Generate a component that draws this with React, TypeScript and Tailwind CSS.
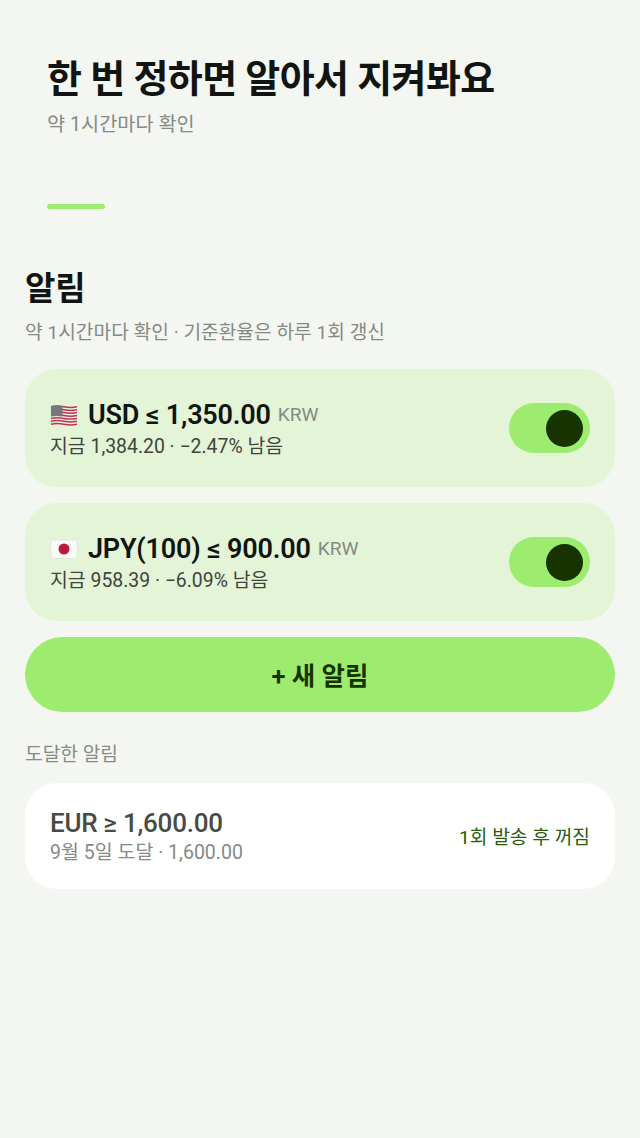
import React from 'react';

const font = { fontFamily: 'Roboto, "Noto Sans CJK KR", sans-serif' };

const stripes = [3.8, 6.7, 9.6, 12.5, 15.4, 18.3, 21.2];

const UsFlag = () => (
  <svg width="28" height="24" viewBox="0 0 28 24" className="shrink-0">
    <path d="M1 3.5 Q7 2 14 3.5 T27 3.5 V21.5 Q21 20 14 21.5 T1 21.5 Z" fill="#ececec" />
    {stripes.map(y => (
      <path key={y} d={`M1 ${y} Q7 ${y - 1.4} 14 ${y} T27 ${y}`} fill="none" stroke="#b8384e" strokeWidth="1.5" />
    ))}
    <path d="M1 3.2 Q6 2 12.5 3 V13.4 Q6 12.4 1 13.6 Z" fill="#77787c" />
  </svg>
);

const JpFlag = () => (
  <svg width="28" height="24" viewBox="0 0 28 24" className="shrink-0">
    <rect x="1" y="3" width="26" height="18" rx="1.5" fill="#fafafa" stroke="#dddddd" strokeWidth="0.5" />
    <circle cx="14" cy="12" r="5.5" fill="#bc1c3c" />
  </svg>
);

type AlertProps = {
  flag: React.ReactNode;
  title: string;
  detail: string;
};

const Toggle = () => (
  <div className="flex h-[50px] w-[81px] shrink-0 items-center justify-end rounded-full bg-[#9deb6f] pr-[7px]">
    <div className="size-[37px] rounded-full bg-[#173300]" />
  </div>
);

const AlertCard = ({ flag, title, detail }: AlertProps) => (
  <div className="flex h-[118px] items-center justify-between rounded-[32px] bg-[#e3f5d6] px-[25px]">
    <div>
      <div className="flex items-center">
        {flag}
        <span className="ml-[10px] text-[27px] leading-[36px] font-semibold tracking-[-0.2px] text-[#111411]">{title}</span>
        <span className="ml-[7px] pt-[1px] text-[19.2px] text-[#858a84]">KRW</span>
      </div>
      <p className="mt-[1px] text-[19.4px] leading-[26px] text-[#3f433e]">{detail}</p>
    </div>
    <Toggle />
  </div>
);

export default function App() {
  return (
    <div className="min-h-[1138px] bg-[#f4f6f1]" style={font}>
      <div className="px-[47px] pt-[52px]">
        <h1 className="text-[38px] leading-[54px] font-semibold tracking-[-0.6px] text-[#111411]">한 번 정하면 알아서 지켜봐요</h1>
        <p className="mt-[4px] text-[19.7px] leading-[30px] text-[#858a84]">약 1시간마다 확인</p>
        <div className="mt-[64px] h-[5px] w-[58px] rounded-full bg-[#9deb6f]" />
      </div>
      <div className="px-[25px] pt-[56px]">
        <h2 className="text-[33px] leading-[48px] font-semibold text-[#111411]">알림</h2>
        <p className="mt-[6px] text-[19.2px] leading-[28px] text-[#858a84]">약 1시간마다 확인 · 기준환율은 하루 1회 갱신</p>
        <div className="mt-[22px] flex flex-col gap-4">
          <AlertCard flag={<UsFlag />} title="USD ≤ 1,350.00" detail="지금 1,384.20 · −2.47% 남음" />
          <AlertCard flag={<JpFlag />} title="JPY(100) ≤ 900.00" detail="지금 958.39 · −6.09% 남음" />
          <button className="h-[75px] rounded-full bg-[#9deb6f] pt-[3px] text-[25.5px] font-semibold text-[#173300]">+ 새 알림</button>
        </div>
        <p className="mt-[29px] text-[19.2px] leading-[28px] text-[#858a84]">도달한 알림</p>
        <div className="mt-[14px] flex h-[106px] items-center justify-between rounded-[32px] bg-white px-[25px]">
          <div className="pb-[2px]">
            <p className="-mt-[1px] text-[26px] leading-[36px] font-medium tracking-[-0.25px] text-[#474b46]">EUR ≥ 1,600.00</p>
            <p className="text-[19.5px] leading-[24px] text-[#858a84]">9월 5일 도달 · 1,600.00</p>
          </div>
          <span className="pt-[5px] text-[19.2px] text-[#2b5c0e]">1회 발송 후 꺼짐</span>
        </div>
      </div>
    </div>
  );
}
